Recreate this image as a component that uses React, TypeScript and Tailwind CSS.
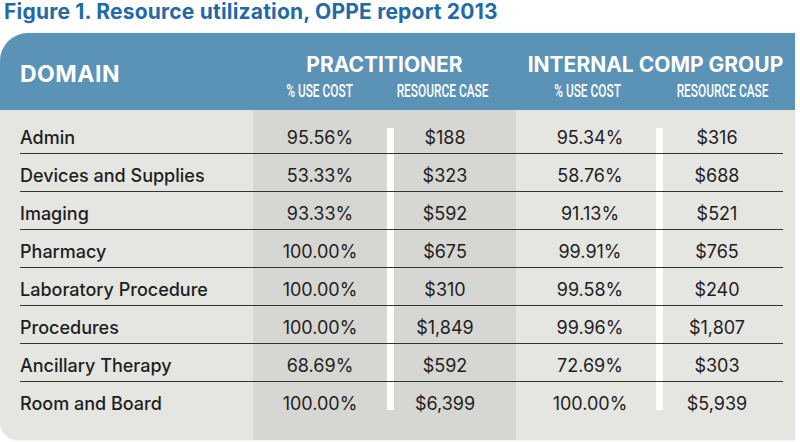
import React from 'react'

const rows = [
  ['Admin', '95.56%', '$188', '95.34%', '$316'],
  ['Devices and Supplies', '53.33%', '$323', '58.76%', '$688'],
  ['Imaging', '93.33%', '$592', '91.13%', '$521'],
  ['Pharmacy', '100.00%', '$675', '99.91%', '$765'],
  ['Laboratory Procedure', '100.00%', '$310', '99.58%', '$240'],
  ['Procedures', '100.00%', '$1,849', '99.96%', '$1,807'],
  ['Ancillary Therapy', '68.69%', '$592', '72.69%', '$303'],
  ['Room and Board', '100.00%', '$6,399', '100.00%', '$5,939'],
]

// grid rows: 1 = top pad, 2..9 = data, 10 = bottom pad
const rowStart = ['row-start-2', 'row-start-3', 'row-start-4', 'row-start-5', 'row-start-6', 'row-start-7', 'row-start-8', 'row-start-9']

const cols = 'grid grid-cols-[20px_233px_134px_7px_102px_20px_140px_7px_108px_12px_12px]'

function Sub({ children }: { children: React.ReactNode }) {
  return (
    <span className="inline-block shrink-0 origin-center scale-x-[0.66] whitespace-nowrap font-['Roboto',sans-serif] text-[18px] font-medium leading-[20px] text-white">
      {children}
    </span>
  )
}

export default function App() {
  return (
    <div className="h-[442px] w-[800px] overflow-hidden bg-white font-['Inter',sans-serif]">
      <h1 className="h-[23px] pl-[4px] pt-[1px] text-[21px] font-bold leading-[22px] tracking-[0.2px] text-[#1f6aa7]">
        Figure 1. Resource utilization, OPPE report 2013
      </h1>

      <div className="mt-[10px] w-[795px] overflow-hidden rounded-tl-[28px] rounded-bl-[18px] shadow-[0_0_2px_rgba(0,0,0,0.15)]">
        {/* header */}
        <div className="flex h-[77px] bg-[#5b93b7] text-white">
          <div className="w-[253px] pl-[20px] pt-[28px] text-[23px] font-bold leading-[26px] tracking-[0.5px]">DOMAIN</div>
          <div className="flex w-[263px] flex-col pt-[20px]">
            <div className="text-center text-[21px] font-bold leading-[24px]">PRACTITIONER</div>
            <div className="mt-[4px] flex">
              <div className="flex w-[134px] justify-center"><Sub>% USE COST</Sub></div>
              <div className="ml-[7px] flex w-[98px] justify-center"><Sub>RESOURCE CASE</Sub></div>
            </div>
          </div>
          <div className="flex flex-1 flex-col pt-[20px]">
            <div className="text-center text-[21px] font-bold leading-[24px]">INTERNAL COMP GROUP</div>
            <div className="mt-[4px] flex">
              <div className="flex w-[144px] justify-center"><Sub>% USE COST</Sub></div>
              <div className="ml-[7px] flex w-[108px] justify-center pl-[4px]"><Sub>RESOURCE CASE</Sub></div>
            </div>
          </div>
        </div>

        {/* body */}
        <div className={`${cols} grid-rows-[6px_repeat(8,38px)_20px] bg-[#e5e5e1] text-[#1e1e1e]`}>
          <div className="col-start-3 col-end-7 row-start-1 row-end-11 bg-[#d6d6d2]" />
          <div className="col-start-4 row-start-2 row-end-10 mb-[10px] mt-[12px] bg-white" />
          <div className="col-start-8 row-start-2 row-end-10 mb-[10px] mt-[12px] bg-white" />

          {rows.map((r, i) => (
            <React.Fragment key={r[0]}>
              {i < rows.length - 1 && (
                <div className={`col-start-2 col-end-11 ${rowStart[i]} border-b border-[#333]`} />
              )}
              <div className={`col-start-2 ${rowStart[i]} flex items-center pt-[5px] text-[18px] font-medium`}>{r[0]}</div>
              <div className={`col-start-3 ${rowStart[i]} flex items-center justify-center pt-[5px] text-[18px]`}>{r[1]}</div>
              <div className={`col-start-5 ${rowStart[i]} flex items-center justify-center pt-[5px] text-[18px]`}>{r[2]}</div>
              <div className={`col-start-7 ${rowStart[i]} flex items-center justify-center pl-[8px] pt-[5px] text-[18px]`}>{r[3]}</div>
              <div className={`col-start-9 ${rowStart[i]} flex items-center justify-center pt-[5px] text-[18px]`}>{r[4]}</div>
            </React.Fragment>
          ))}
        </div>
      </div>
    </div>
  )
}
